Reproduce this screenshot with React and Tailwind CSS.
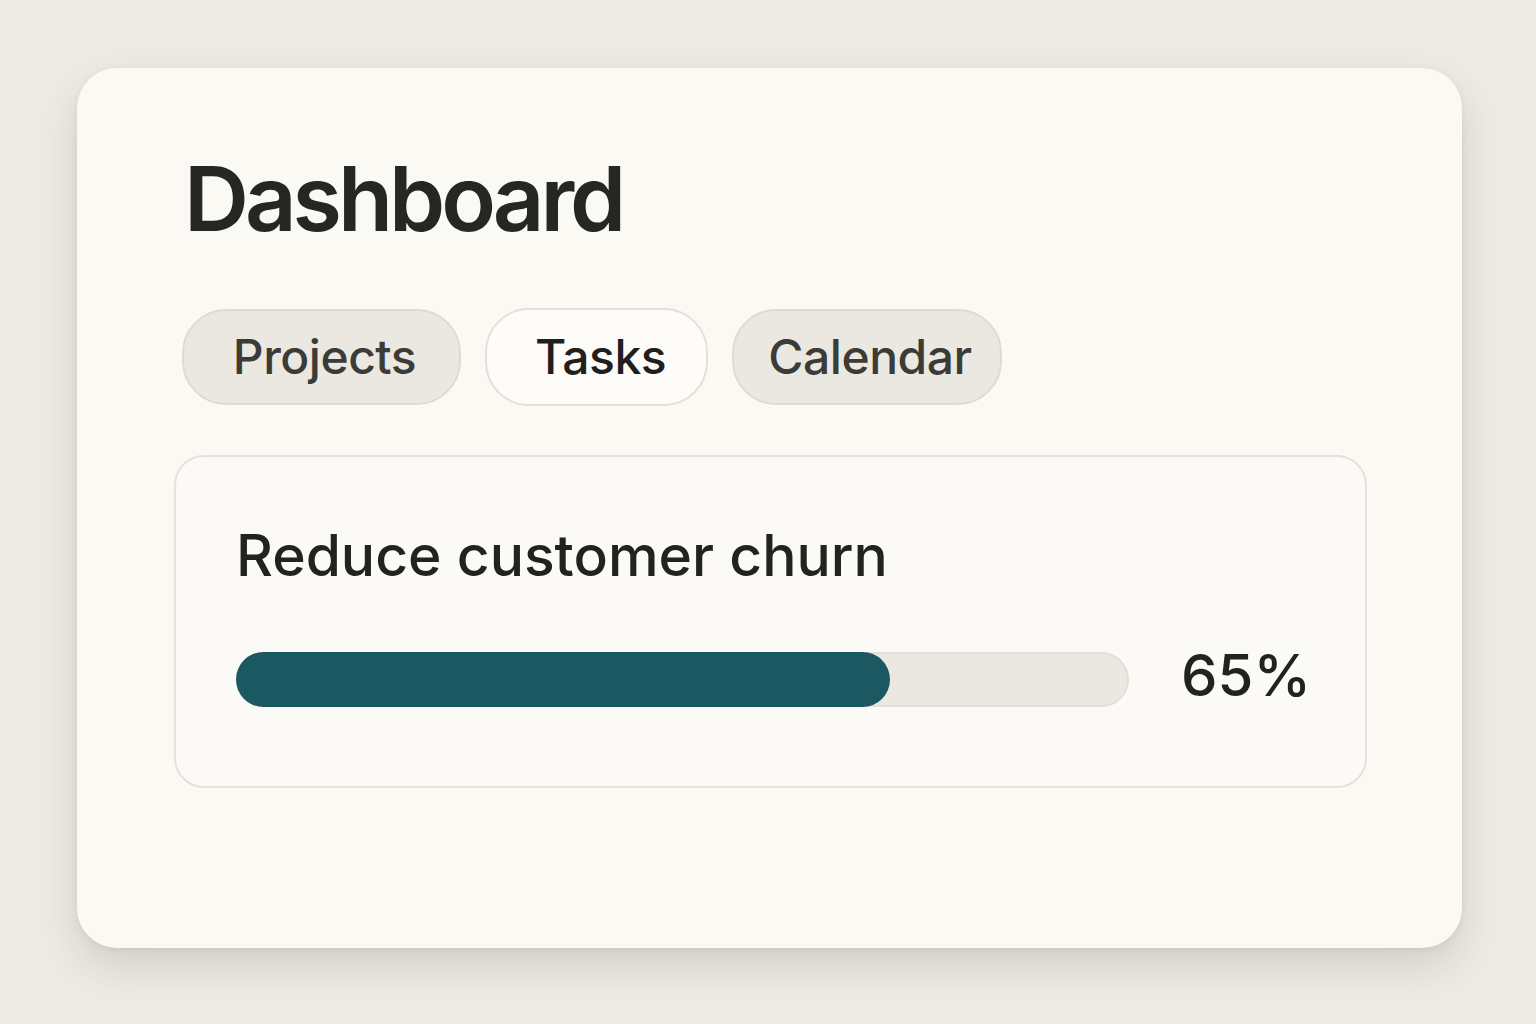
import React from "react";

const tabs = [
  { label: "Projects", active: false, width: "w-[279px]" },
  { label: "Tasks", active: true, width: "w-[223px]" },
  { label: "Calendar", active: false, width: "w-[270px]" },
];

const goal = { title: "Reduce customer churn", progress: 65 };

export default function App() {
  return (
    <div className="min-h-screen w-full bg-[#eeebe4] px-[77px] pt-[68px] font-['Inter','Liberation_Sans',sans-serif]">
      {/* Main panel */}
      <div className="h-[880px] w-[1385px] rounded-[40px] bg-[#fbf9f4] pl-[97px] pr-[95px] pt-[86px] shadow-[0_18px_40px_rgba(90,80,60,0.18),0_2px_6px_rgba(90,80,60,0.08)]">
        <h1 className="ml-[10px] text-[90px] font-semibold leading-none tracking-[-0.045em] text-[#262725]">
          Dashboard
        </h1>

        {/* Tabs */}
        <div className="ml-[8px] mt-[64px] flex items-center gap-[24px]">
          {tabs.map((tab) => (
            <button
              key={tab.label}
              className={
                tab.active
                  ? `flex h-[98px] ${tab.width} items-center justify-center rounded-[44px] border-2 border-[#e4e0d7] bg-[#fdfcf8] pl-[8px] text-[48px] font-medium tracking-[-0.01em] text-[#1f201e]`
                  : `flex h-[96px] ${tab.width} items-center justify-center rounded-[44px] border-2 border-[#dfdbd3] bg-[#ebe8e1] pl-[6px] text-[48px] font-medium tracking-[-0.01em] text-[#3b3b37]`
              }
            >
              {tab.label}
            </button>
          ))}
        </div>

        {/* Goal card */}
        <div className="mt-[49px] rounded-[30px] border-2 border-[#e6e2da] bg-[#fcfaf6] pb-[74px] pl-[60px] pr-[60px] pt-[70px]">
          <h2 className="text-[57px] font-medium leading-none text-[#222321]">
            {goal.title}
          </h2>
          <div className="mt-[62px] flex items-center gap-[52px]">
            <div className="h-[55px] flex-1 rounded-full border-2 border-[#e2dfd8] bg-[#ebe8e2]">
              <div
                className="-m-[2px] h-[55px] rounded-full bg-[#1b5861]"
                style={{ width: `calc(${(657 / 896) * 100}% + 2px)` }}
              />
            </div>
            <span className="mb-[8px] w-[124px] shrink-0 text-right text-[58px] font-medium leading-none text-[#222321]">
              {goal.progress}%
            </span>
          </div>
        </div>
      </div>
    </div>
  );
}
